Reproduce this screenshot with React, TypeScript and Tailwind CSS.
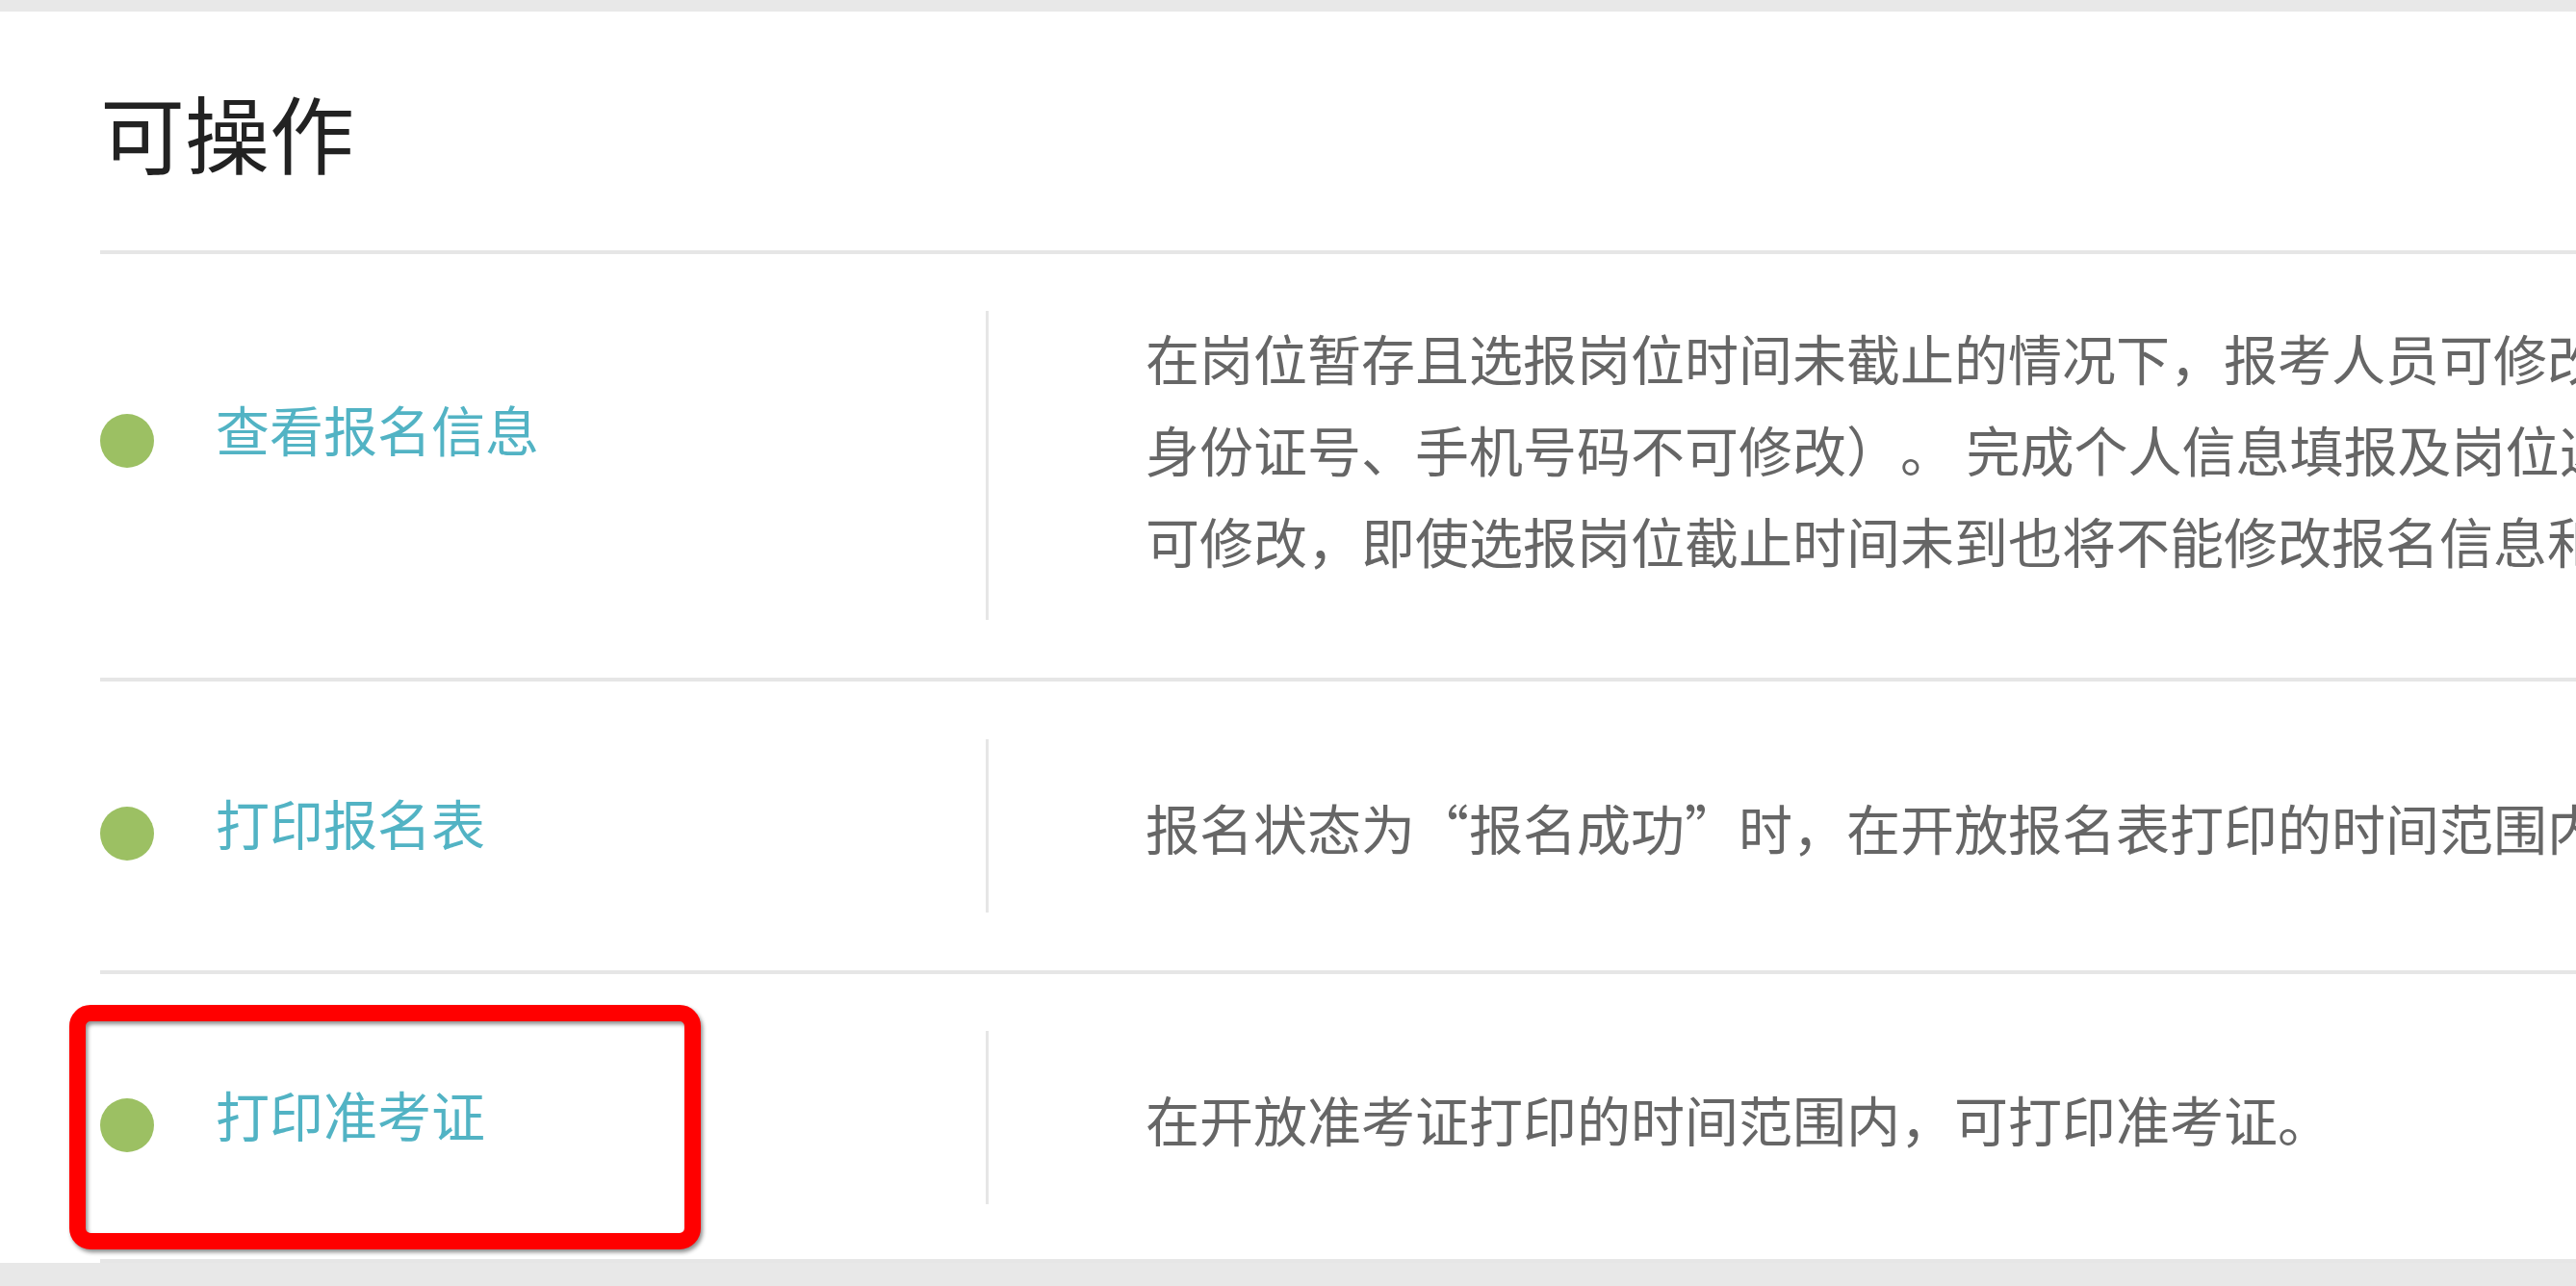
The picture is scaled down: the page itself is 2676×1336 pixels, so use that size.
import React from "react";

const font = "font-['Noto_Sans_CJK_SC','Noto_Sans',sans-serif]";

function Dot() {
  return <div className="w-[56px] h-[56px] shrink-0 rounded-full bg-[#9cc063] mt-[16px]" />;
}

function Label({ children }: { children: React.ReactNode }) {
  return (
    <span className="ml-[64px] -mt-[10px] text-[56px] leading-[95px] text-[#52b3c4] whitespace-nowrap">
      {children}
    </span>
  );
}

export default function App() {
  return (
    <div className={`w-[2676px] h-[1336px] overflow-hidden bg-[#e8e8e8] pt-[12px] [text-spacing-trim:space-all] ${font}`}>
      <div className="bg-white h-[1300px] pl-[104px]">
        {/* Title */}
        <div className="h-[248px] flex items-center">
          <h1 className="text-[88px] leading-none text-[#222] font-normal">可操作</h1>
        </div>

        {/* Row 1 */}
        <div className="border-t-4 border-[#e6e6e6] pt-[59px] pb-[60px] flex">
          <div className="w-[920px] shrink-0 flex items-center pb-[68px]">
            <Dot />
            <Label>查看报名信息</Label>
          </div>
          <div className="border-l-[3px] border-[#e6e6e6] pl-[163px] h-[321px] text-[56px] leading-[95px] text-[#666] whitespace-nowrap">
            <div>在岗位暂存且选报岗位时间未截止的情况下，报考人员可修改报名信息（姓名、</div>
            <div>身份证号、手机号码不可修改）。 完成个人信息填报及岗位选报并点击确认提交后，不</div>
            <div>可修改，即使选报岗位截止时间未到也将不能修改报名信息和岗位。</div>
          </div>
        </div>

        {/* Row 2 */}
        <div className="border-t-4 border-[#e6e6e6] py-[60px] flex">
          <div className="w-[920px] shrink-0 flex items-center">
            <Dot />
            <Label>打印报名表</Label>
          </div>
          <div className="border-l-[3px] border-[#e6e6e6] pl-[163px] h-[180px] flex items-center text-[56px] leading-[95px] text-[#666] whitespace-nowrap">
            报名状态为“报名成功”时，在开放报名表打印的时间范围内，可打印报名表。
          </div>
        </div>

        {/* Row 3 */}
        <div className="relative border-t-4 border-b-4 border-[#e6e6e6] pt-[59px] pb-[57px] flex">
          <div className="w-[920px] shrink-0 flex items-center">
            <Dot />
            <Label>打印准考证</Label>
          </div>
          <div className="border-l-[3px] border-[#e6e6e6] pl-[163px] h-[180px] flex items-center text-[56px] leading-[95px] text-[#666] whitespace-nowrap">
            在开放准考证打印的时间范围内，可打印准考证。
          </div>
          <div className="absolute left-[-32px] top-[32px] w-[656px] h-[254px] border-[17px] border-[#ff0000] rounded-[22px] drop-shadow-[2px_3px_2px_rgba(0,0,0,0.45)]" />
        </div>
      </div>
    </div>
  );
}
